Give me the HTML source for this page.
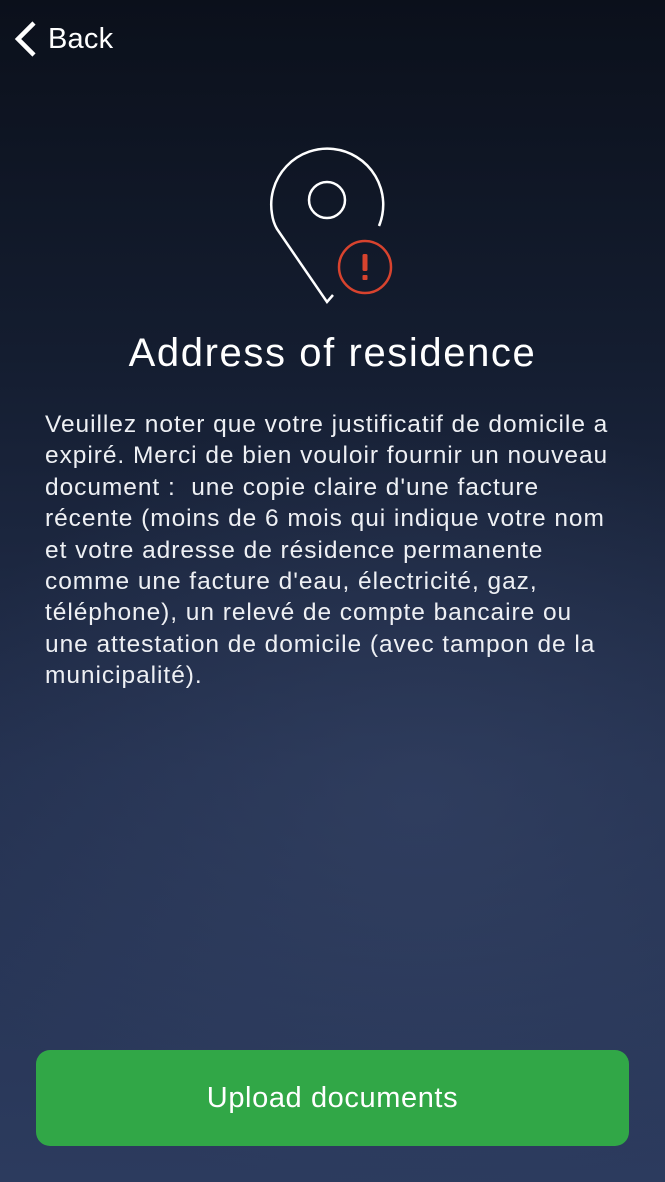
<!DOCTYPE html>
<html><head><meta charset="utf-8"><style>
html,body{margin:0;padding:0}
body{width:665px;height:1182px;overflow:hidden;position:relative;font-family:"Liberation Sans",sans-serif;color:#fff;
background:radial-gradient(ellipse 500px 400px at 420px 800px,rgba(60,75,110,0.45),rgba(0,0,0,0)),linear-gradient(180deg,#0b101b 0%,#141d30 30%,#243150 65%,#2c3b5e 100%);}
.back{position:absolute;left:14px;top:20px;display:flex;align-items:center}
.back span{font-size:29px;margin-left:10px;letter-spacing:0.2px}
h1{position:absolute;top:331px;left:0;width:665px;text-align:center;font-weight:normal;font-size:40px;margin:0;letter-spacing:1.6px}
p{position:absolute;left:45px;top:409px;width:620px;margin:0;font-size:24.5px;line-height:31.4px;color:#eef0f4;letter-spacing:0.95px;white-space:nowrap}
.btn{position:absolute;left:36px;top:1050px;width:593px;height:96px;border-radius:14px;background:#31a747;display:flex;align-items:center;justify-content:center;font-size:29px;letter-spacing:0.6px}
</style></head><body>
<div class="back"><svg width="24" height="38" viewBox="0 0 24 38"><path d="M20 3 L4 19 L20 35" fill="none" stroke="#fff" stroke-width="4.5"/></svg><span>Back</span></div>
<svg style="position:absolute;left:0;top:0" width="665" height="320">
<path d="M379 226 A56 56 0 1 0 272 214 Q273 222 277 229 L327 302 L333 295" fill="none" stroke="#fff" stroke-width="2.5"/>
<circle cx="327" cy="200" r="18" fill="none" stroke="#fff" stroke-width="2.5"/>
<circle cx="365" cy="267" r="26" fill="none" stroke="#d8432e" stroke-width="2.5"/>
<rect x="362.5" y="254" width="5" height="17" rx="1.5" fill="#d8432e"/>
<rect x="362.5" y="275" width="5" height="5" rx="1" fill="#d8432e"/>
</svg>
<h1>Address of residence</h1>
<p>Veuillez noter que votre justificatif de domicile a<br>expiré. Merci de bien vouloir fournir un nouveau<br>document :&nbsp; une copie claire d'une facture<br>récente (moins de 6 mois qui indique votre nom<br>et votre adresse de résidence permanente<br>comme une facture d'eau, électricité, gaz,<br>téléphone), un relevé de compte bancaire ou<br>une attestation de domicile (avec tampon de la<br>municipalité).</p>
<div class="btn">Upload documents</div>
</body></html>
